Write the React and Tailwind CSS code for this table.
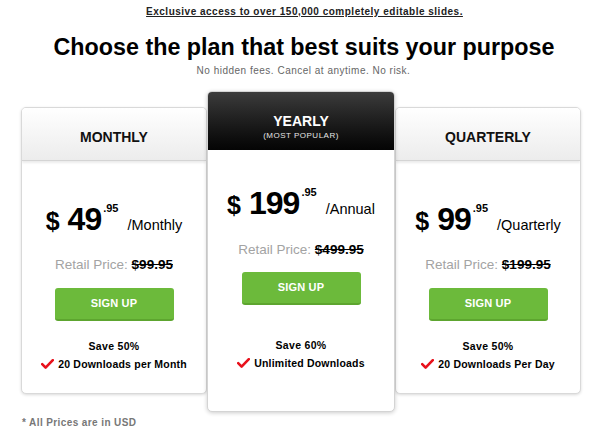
import React from 'react';

const Check = () => (
	<svg width="13" height="10" viewBox="0 0 13 10" className="shrink-0">
		<path d="M1.2 5.2 L4.6 8.6 L11.8 1.2" fill="none" stroke="#e8121c" strokeWidth="2.6" strokeLinecap="round" strokeLinejoin="round" />
	</svg>
);

const Price = ({ amount, period }) => (
	<div className="flex items-baseline justify-center text-black">
		<span className="text-[25px] font-bold mr-[8px]">$</span>
		<span className="text-[32px] font-bold leading-none tracking-[-1px]">{amount}</span>
		<span className="text-[11px] font-bold self-start -mt-[3px] ml-[2px]">.95</span>
		<span className="text-[14.5px] ml-[9px]">{period}</span>
	</div>
);

const Body = ({ amount, period, retail, save, feature, priceTop, retailMt, btnMt, saveMt }) => (
	<div className={`flex flex-col items-center ${priceTop}`}>
		<Price amount={amount} period={period} />
		<div className={`${retailMt} text-[13.5px] leading-[18px]`}>
			<span className="text-[#a3a3a3]">Retail Price: </span>
			<span className="font-bold text-black line-through">{retail}</span>
		</div>
		<button className={`${btnMt} w-[119px] h-[33px] rounded-[3px] bg-[#6cba3b] border-b-2 border-[#5da52f] text-white text-[11px] font-bold tracking-[0.2px]`}>
			SIGN UP
		</button>
		<div className={`${saveMt} text-[10.5px] leading-[14px] font-bold text-black tracking-[0.3px] text-center`}>
			{save}
		</div>
		<div className="flex items-center gap-[4px] text-[10.5px] leading-[14px] font-bold text-black tracking-[0.2px] mt-[4px]">
			<Check />
			<span>{feature}</span>
		</div>
	</div>
);

const SideCard = ({ title, ...rest }) => (
	<div className="mt-[16px] w-[186px] h-[287px] bg-white border border-[#d9d9d9] rounded-[5px] shadow-[0_1px_3px_rgba(0,0,0,0.15)] flex flex-col overflow-hidden">
		<div className="h-[53px] shrink-0 bg-gradient-to-b from-[#ffffff] to-[#ececec] border-b border-[#d4d4d4] shadow-[0_2px_2px_rgba(0,0,0,0.08)] flex items-center justify-center pt-[7px]">
			<span className="text-[14px] font-bold text-[#111]">{title}</span>
		</div>
		<Body {...rest} priceTop="pt-[42px]" retailMt="mt-[15px]" btnMt="mt-[14px]" saveMt="mt-[18px]" />
	</div>
);

export default function App() {
	return (
		<div className="w-[600px] h-[434px] bg-white font-['Liberation_Sans',Arial,sans-serif] overflow-hidden">
			<p className="pt-[6px] pl-[9px] leading-[12px] text-center text-[10px] font-bold text-[#222] underline tracking-[0.5px]">
				Exclusive access to over 150,000 completely editable slides.
			</p>
			<h1 className="mt-[15px] pl-[8px] text-center text-[23.3px] font-bold text-black leading-[28px]">
				Choose the plan that best suits your purpose
			</h1>
			<p className="mt-[4px] pl-[7px] leading-[12px] text-center text-[10px] tracking-[0.5px] text-[#666]">
				No hidden fees. Cancel at anytime. No risk.
			</p>
			<div className="mt-[14px] ml-[21px] w-[562px] flex items-start">
				<SideCard
					title="MONTHLY"
					amount="49"
					period="/Monthly"
					retail="$99.95"
					save="Save 50%"
					feature="20 Downloads per Month"
				/>
				<div className="relative z-10 w-[188px] h-[321px] bg-white border border-[#d4d4d4] rounded-[5px] shadow-[0_1px_4px_rgba(0,0,0,0.2)] flex flex-col overflow-hidden">
					<div className="h-[58px] shrink-0 bg-gradient-to-b from-[#3c3c3c] to-[#050505] flex flex-col items-center justify-center pt-[12px]">
						<span className="text-[14px] font-bold text-white leading-[17px]">YEARLY</span>
						<span className="text-[8px] text-[#e5e5e5] leading-[11px] tracking-[0.5px]">(MOST POPULAR)</span>
					</div>
					<Body
						amount="199"
						period="/Annual"
						retail="$499.95"
						save="Save 60%"
						feature="Unlimited Downloads"
						priceTop="pt-[37px]"
						retailMt="mt-[16px]"
						btnMt="mt-[13px]"
						saveMt="mt-[33px]"
					/>
				</div>
				<SideCard
					title="QUARTERLY"
					amount="99"
					period="/Quarterly"
					retail="$199.95"
					save="Save 50%"
					feature="20 Downloads Per Day"
				/>
			</div>
			<p className="mt-[5px] ml-[22px] leading-[12px] text-[10px] font-bold text-[#777] tracking-[0.4px]">
				* All Prices are in USD
			</p>
		</div>
	);
}
